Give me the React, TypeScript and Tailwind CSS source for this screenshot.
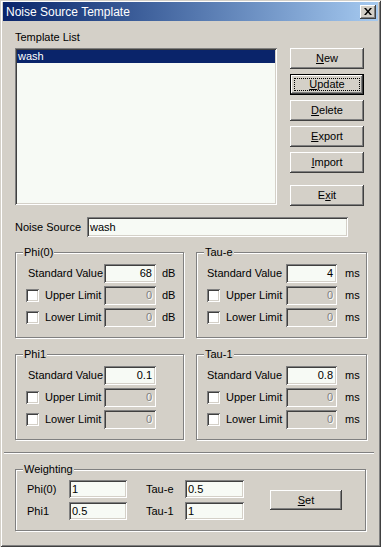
import React from "react";

const sunken =
  "shadow-[inset_1px_1px_0_#808080,inset_-1px_-1px_0_#ffffff,inset_2px_2px_0_#404040,inset_-2px_-2px_0_#d4d0c8]";
const raised =
  "shadow-[inset_-1px_-1px_0_#404040,inset_1px_1px_0_#ffffff,inset_-2px_-2px_0_#808080,inset_2px_2px_0_#d4d0c8]";
const etched = "border border-[#808080] shadow-[inset_1px_1px_0_#ffffff,1px_1px_0_#ffffff]";

function Label({ text, u }: { text: string; u: number }) {
  return (
    <span>
      {text.slice(0, u)}
      <span className="underline underline-offset-[1px]">{text[u]}</span>
      {text.slice(u + 1)}
    </span>
  );
}

function Btn({ text, u, w, def }: { text: string; u: number; w: string; def?: boolean }) {
  if (def) {
    return (
      <div className={`${w} h-[21px] border border-black bg-[#d4d0c8] flex`}>
        <div className={`flex-1 ${raised} flex p-[3px]`}>
          <div className="flex-1 border border-dotted border-black flex items-center justify-center leading-none">
            <Label text={text} u={u} />
          </div>
        </div>
      </div>
    );
  }
  return (
    <div className={`${w} h-[21px] bg-[#d4d0c8] ${raised} flex items-center justify-center leading-none`}>
      <Label text={text} u={u} />
    </div>
  );
}

function Field({ value, w, disabled, left, h = "h-[19px]" }: { value: string; w: string; disabled?: boolean; left?: boolean; h?: string }) {
  return (
    <div
      className={`${w} ${h} ${sunken} ${disabled ? "bg-[#d4d0c8] text-[#808080] [text-shadow:1px_1px_0_#ffffff]" : "bg-[#f7faf5] text-black"} flex items-center ${left ? "justify-start pl-[3px]" : "justify-end pr-[4px]"} leading-none`}
    >
      {value}
    </div>
  );
}

function Check() {
  return <div className={`w-[13px] h-[13px] bg-white ${sunken} shrink-0`} />;
}

function Group({ title, w, h, children, pl }: { title: string; w: string; h: string; children: React.ReactNode; pl: string }) {
  return (
    <div className={`relative ${w} ${h} ${etched}`}>
      <span className="absolute left-[7px] -top-[7px] bg-[#d4d0c8] px-[1px] leading-[13px]">{title}</span>
      <div className={`flex flex-col ${pl}`}>{children}</div>
    </div>
  );
}

function ParamGroup({
  title,
  unit,
  std,
  variant,
}: {
  title: string;
  unit?: string;
  std: string;
  variant: "left" | "right";
}) {
  const isLeft = variant === "left";
  const cell = isLeft ? "w-[77px]" : "w-[79px]";
  const inW = isLeft ? "w-[52px]" : "w-[51px]";
  const unitMl = isLeft ? "ml-[6px]" : "ml-[8px]";
  const rows = [
    { label: "Standard Value", check: false, value: std, disabled: false },
    { label: "Upper Limit", check: true, value: "0", disabled: true },
    { label: "Lower Limit", check: true, value: "0", disabled: true },
  ];
  return (
    <Group title={title} w={isLeft ? "w-[169px]" : "w-[171px]"} h="h-[86px]" pl={isLeft ? "pl-[11px] pt-[11px] gap-[3px]" : "pl-[10px] pt-[11px] gap-[3px]"}>
      {rows.map((r) => (
        <div key={r.label} className="flex items-center h-[19px]">
          <div className={`${cell} flex items-center ${r.check && isLeft ? "-ml-[1px]" : ""}`}>
            {r.check ? (
              <>
                <Check />
                <span className="ml-[6px]">{r.label}</span>
              </>
            ) : (
              <span className={isLeft ? "ml-[1px]" : ""}>{r.label}</span>
            )}
          </div>
          <div className={r.check && isLeft ? "ml-[1px]" : ""}>
            <Field value={r.value} w={inW} disabled={r.disabled} />
          </div>
          {unit && <span className={unitMl}>{unit}</span>}
        </div>
      ))}
    </Group>
  );
}

export default function App() {
  return (
    <div
      className={`w-[381px] h-[547px] bg-[#d4d0c8] font-['Liberation_Sans',Arial,sans-serif] text-[11px] text-black overflow-hidden flex flex-col pt-[2px] px-[3px] shadow-[inset_1px_1px_0_#d4d0c8,inset_-1px_-1px_0_#404040,inset_2px_2px_0_#ffffff,inset_-2px_-2px_0_#808080]`}
    >
      {/* Title bar */}
      <div className="h-[19px] shrink-0 flex items-center bg-gradient-to-r from-[#0a246a] to-[#a6caf0] pl-[3px] pr-[2px]">
        <span className="text-white text-[12px] leading-none">Noise Source Template</span>
        <div className={`ml-auto w-[16px] h-[14px] bg-[#d4d0c8] ${raised} flex items-center justify-center`}>
          <svg width="8" height="7" viewBox="0 0 8 7">
            <path d="M0 0h2l2 2.5L6 0h2L5 3.5 8 7H6L4 4.5 2 7H0l3-3.5z" fill="#000" />
          </svg>
        </div>
      </div>

      {/* Body */}
      <div className="flex flex-col pl-[12px]">
        <div className="mt-[10px] h-[13px] leading-[13px]">Template List</div>

        <div className="mt-[4px] flex items-start">
          <div className={`w-[262px] h-[157px] bg-[#f7faf5] ${sunken} p-[2px]`}>
            <div className="h-[13px] bg-[#0a246a] text-white leading-[13px] pl-[1px]">wash</div>
          </div>
          <div className="ml-[13px] flex flex-col">
            <Btn text="New" u={0} w="w-[74px]" />
            <div className="mt-[5px]">
              <Btn text="Update" u={0} w="w-[74px]" def />
            </div>
            <div className="mt-[5px]">
              <Btn text="Delete" u={0} w="w-[74px]" />
            </div>
            <div className="mt-[5px]">
              <Btn text="Export" u={0} w="w-[74px]" />
            </div>
            <div className="mt-[5px]">
              <Btn text="Import" u={0} w="w-[74px]" />
            </div>
            <div className="mt-[12px]">
              <Btn text="Exit" u={1} w="w-[74px]" />
            </div>
          </div>
        </div>

        {/* Noise source */}
        <div className="mt-[11px] flex items-center">
          <span className="w-[72px]">Noise Source</span>
          <Field value="wash" w="w-[261px]" h="h-[20px]" left />
        </div>

        {/* Groups row 1 */}
        <div className="mt-[15px] flex gap-[12px]">
          <ParamGroup title="Phi(0)" unit="dB" std="68" variant="left" />
          <ParamGroup title="Tau-e" unit="ms" std="4" variant="right" />
        </div>

        {/* Groups row 2 */}
        <div className="mt-[16px] flex gap-[12px]">
          <ParamGroup title="Phi1" std="0.1" variant="left" />
          <ParamGroup title="Tau-1" unit="ms" std="0.8" variant="right" />
        </div>

        {/* Separator */}
        <div className="mt-[12px] -ml-[11px] w-[370px] h-[2px] border-t border-t-[#808080] border-b border-b-[#ffffff]" />

        {/* Weighting */}
        <div className="mt-[15px]">
          <Group title="Weighting" w="w-[351px]" h="h-[62px]" pl="pl-[11px] pt-[10px]">
            <div className="flex items-center">
              <div className="flex flex-col gap-[4px]">
                <div className="flex items-center h-[18px]">
                  <span className="w-[42px]">Phi(0)</span>
                  <Field value="1" w="w-[58px]" h="h-[18px]" left />
                  <span className="ml-[19px] w-[39px]">Tau-e</span>
                  <Field value="0.5" w="w-[59px]" h="h-[18px]" left />
                </div>
                <div className="flex items-center h-[18px]">
                  <span className="w-[42px]">Phi1</span>
                  <Field value="0.5" w="w-[58px]" h="h-[18px]" left />
                  <span className="ml-[19px] w-[39px]">Tau-1</span>
                  <Field value="1" w="w-[59px]" h="h-[18px]" left />
                </div>
              </div>
              <div className="ml-[26px]">
                <div className={`w-[72px] h-[20px] bg-[#d4d0c8] ${raised} flex items-center justify-center leading-none`}>
                  <Label text="Set" u={0} />
                </div>
              </div>
            </div>
          </Group>
        </div>
      </div>
    </div>
  );
}
